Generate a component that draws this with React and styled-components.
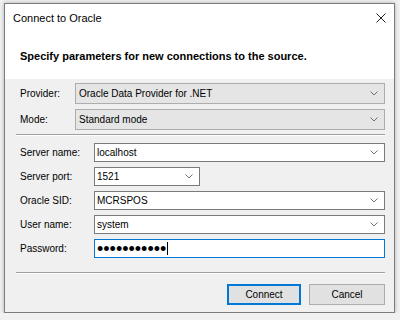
import React from 'react'
import styled, { createGlobalStyle } from 'styled-components'

const GlobalStyle = createGlobalStyle`
  html, body {
    margin: 0;
    padding: 0;
    background: #f1f1f1;
  }
  body {
    font-family: "Liberation Sans", Arial, sans-serif;
    font-size: 10px;
    color: #000;
  }
`

const Window = styled.div`
  box-sizing: border-box;
  margin: 3px 0 0 4px;
  width: 391px;
  height: 310px;
  border: 1px solid #7c7c7c;
  box-shadow: 0 0 4px rgba(0, 0, 0, 0.28);
  background: #f0f0f0;
  display: flex;
  flex-direction: column;
`

const TitleBar = styled.div`
  height: 27px;
  display: flex;
  align-items: center;
  justify-content: space-between;
  padding: 0 8px 0 8px;
  background: #fff;
  font-size: 11px;
`

const Header = styled.div`
  box-sizing: border-box;
  height: 48px;
  padding: 19px 0 0 15px;
  background: #fff;
  font-weight: bold;
  font-size: 11px;
`

const Panel = styled.div`
  flex: 1;
  display: flex;
  flex-direction: column;
  padding: 3px 9px 0 11px;
`

const Fields = styled.div`
  display: grid;
  grid-template-columns: ${p => p.$labelWidth}px 1fr;
  grid-auto-rows: ${p => p.$rowHeight}px;
  row-gap: 5px;
  align-items: center;
  margin-top: ${p => p.$top || 0}px;
`

const Label = styled.div`
  padding-left: 4px;
`

const Combo = styled.div`
  box-sizing: border-box;
  height: 100%;
  width: ${p => (p.$width ? `${p.$width}px` : 'auto')};
  justify-self: ${p => (p.$width ? 'start' : 'stretch')};
  display: flex;
  align-items: center;
  justify-content: space-between;
  padding-left: ${p => (p.$list ? 3 : 2)}px;
  background: ${p => (p.$list ? '#e5e5e5' : '#fff')};
  border: 1px solid ${p => (p.$focused ? '#0078d7' : p.$list ? '#adadad' : '#7a7a7a')};
`

const Chevron = styled.svg`
  width: 8px;
  height: 5px;
  margin-right: 6px;
  flex: none;
`

const Dots = styled.span`
  font-size: 18px;
  line-height: 1;
`

const Caret = styled.span`
  display: inline-block;
  width: 1px;
  height: 13px;
  background: #000;
  margin-left: 1px;
`

const PasswordValue = styled.div`
  display: flex;
  align-items: center;
`

const Separator = styled.div`
  margin-top: ${p => p.$top}px;
  border-top: 1px solid #a0a0a0;
  border-bottom: 1px solid #fff;
`

const Buttons = styled.div`
  display: flex;
  justify-content: flex-end;
  gap: 8px;
  margin-top: 10px;
`

const Button = styled.button`
  box-sizing: border-box;
  width: ${p => p.$width}px;
  height: 21px;
  padding: 0;
  font-family: "Liberation Sans", Arial, sans-serif;
  font-size: 10px;
  color: #000;
  background: #e1e1e1;
  border: 1px solid ${p => (p.$default ? '#0078d7' : '#adadad')};
  box-shadow: ${p => (p.$default ? 'inset 0 0 0 1px #0078d7' : 'none')};
`

const ChevronIcon = () => (
  <Chevron viewBox="0 0 8 5">
    <polyline points="0.5,0.5 4,4 7.5,0.5" fill="none" stroke="#707070" strokeWidth="1" />
  </Chevron>
)

const CloseIcon = () => (
  <svg width="10" height="10" viewBox="0 0 10 10">
    <path d="M0.5 0.5 L9.5 9.5 M9.5 0.5 L0.5 9.5" stroke="#222" strokeWidth="1" />
  </svg>
)

const ComboBox = ({ value, ...rest }) => (
  <Combo {...rest}>
    <span>{value}</span>
    <ChevronIcon />
  </Combo>
)

const App = () => {
  return (
    <>
      <GlobalStyle />
      <Window>
        <TitleBar>
          <span>Connect to Oracle</span>
          <CloseIcon />
        </TitleBar>
        <Header>Specify parameters for new connections to the source.</Header>
        <Panel>
          <Fields $labelWidth={59} $rowHeight={21} $top={1}>
            <Label>Provider:</Label>
            <ComboBox $list value="Oracle Data Provider for .NET" />
            <Label>Mode:</Label>
            <ComboBox $list value="Standard mode" />
          </Fields>
          <Separator $top={4} />
          <Fields $labelWidth={78} $rowHeight={19} $top={7}>
            <Label>Server name:</Label>
            <ComboBox value="localhost" />
            <Label>Server port:</Label>
            <ComboBox value="1521" $width={106} />
            <Label>Oracle SID:</Label>
            <ComboBox value="MCRSPOS" />
            <Label>User name:</Label>
            <ComboBox value="system" />
            <Label>Password:</Label>
            <Combo $focused>
              <PasswordValue>
                <Dots>•••••••••••</Dots>
                <Caret />
              </PasswordValue>
            </Combo>
          </Fields>
          <Separator $top={14} />
          <Buttons>
            <Button $default $width={74}>Connect</Button>
            <Button $width={76}>Cancel</Button>
          </Buttons>
        </Panel>
      </Window>
    </>
  )
}

export default App
